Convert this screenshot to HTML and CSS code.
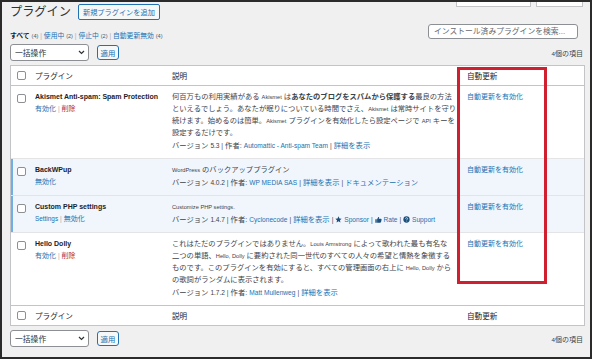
FILE: index.html
```html
<!DOCTYPE html>
<html lang="ja">
<head>
<meta charset="utf-8">
<title>プラグイン</title>
<link rel="stylesheet" href="styles.css">
</head>
<body>
<div class="frame">
    <div class="top">
        <div class="title-wrap">
            <h1 class="title">プラグイン</h1>
            <a class="add-new">新規プラグインを追加</a>
        </div>
        <div class="tabs"><span class="tab t1"></span><span class="tab t2"></span></div>
    </div>

    <div class="filters">
        <div class="subsubsub">
            <b>すべて</b> <span class="num">(4)</span> <span class="sep">|</span>
            <a>使用中</a> <span class="num">(2)</span> <span class="sep">|</span>
            <a>停止中</a> <span class="num">(2)</span> <span class="sep">|</span>
            <a>自動更新無効</a> <span class="num">(4)</span>
        </div>
        <input class="search" type="text" placeholder="インストール済みプラグインを検索...">
    </div>

    <div class="tablenav">
        <div class="bulk">
            <div class="select">一括操作
                <svg width="7" height="5" viewBox="0 0 7 5"><path d="M1 1l2.5 2.5L6 1" fill="none" stroke="#2c3338" stroke-width="1.2"/></svg>
            </div>
            <button class="apply">適用</button>
        </div>
        <span class="count"><span class="en">4</span>個の項目</span>
    </div>

    <div class="table-wrap">
        <table class="plugins">
            <colgroup>
                <col class="c-cb"><col class="c-name"><col class="c-desc"><col class="c-auto">
            </colgroup>
            <thead>
                <tr>
                    <th class="cb"><input class="check" type="checkbox"></th>
                    <th>プラグイン</th>
                    <th>説明</th>
                    <th>自動更新</th>
                </tr>
            </thead>
            <tbody>
                <tr>
                    <td class="cb"><input class="check" type="checkbox"></td>
                    <td class="name">
                        <strong>Akismet Anti-spam: Spam Protection</strong>
                        <div class="actions"><a>有効化</a> <span class="sep">|</span> <a class="del">削除</a></div>
                    </td>
                    <td class="desc">
                        <p>何百万もの利用実績がある <span class="en">Akismet</span> は<strong>あなたのブログをスパムから保護する</strong>最良の方法<br>といえるでしょう。あなたが眠りについている時間でさえ、<span class="en">Akismet</span> は常時サイトを守り<br>続けます。始めるのは簡単。<span class="en">Akismet</span> プラグインを有効化したら設定ページで <span class="en">API</span> キーを<br>設定するだけです。</p>
                        <div class="version">バージョン <span class="en">5.3 |</span> 作者: <a class="en">Automattic - Anti-spam Team</a> <span class="en">|</span> <a>詳細を表示</a></div>
                    </td>
                    <td class="auto"><a>自動更新を有効化</a></td>
                </tr>
                <tr class="active">
                    <td class="cb"><input class="check" type="checkbox"></td>
                    <td class="name">
                        <strong>BackWPup</strong>
                        <div class="actions"><a>無効化</a></div>
                    </td>
                    <td class="desc">
                        <p><span class="en">WordPress</span> のバックアッププラグイン</p>
                        <div class="version">バージョン <span class="en">4.0.2 |</span> 作者: <a class="en">WP MEDIA SAS</a> <span class="en">|</span> <a>詳細を表示</a> <span class="en">|</span> <a>ドキュメンテーション</a></div>
                    </td>
                    <td class="auto"><a>自動更新を有効化</a></td>
                </tr>
                <tr class="active">
                    <td class="cb"><input class="check" type="checkbox"></td>
                    <td class="name">
                        <strong>Custom PHP settings</strong>
                        <div class="actions"><a class="en">Settings</a> <span class="sep">|</span> <a>無効化</a></div>
                    </td>
                    <td class="desc">
                        <p><span class="en">Customize PHP settings.</span></p>
                        <div class="version">バージョン <span class="en">1.4.7 |</span> 作者: <a class="en">Cyclonecode</a> <span class="en">|</span> <a>詳細を表示</a> <span class="en">|</span>
                            <a class="en"><svg class="ico" viewBox="0 0 20 20"><path d="M10 1l2.7 6 6.3.6-4.8 4.3 1.4 6.4L10 15l-5.6 3.3 1.4-6.4L1 7.6 7.3 7z" fill="#1d4f7c"/></svg> Sponsor</a> <span class="en">|</span>
                            <a class="en"><svg class="ico" viewBox="0 0 20 20"><path d="M1 9h4v10H1z M6 9.5l3.5-7c1.6 0 2.5 1 2.2 2.6L11 8h6c1.2 0 2 1 1.8 2.2l-1.3 6.5c-.3 1.3-1.2 2.3-2.5 2.3H6z" fill="#1d4f7c"/></svg> Rate</a> <span class="en">|</span>
                            <a class="en"><svg class="ico" viewBox="0 0 20 20"><circle cx="10" cy="10" r="9" fill="#1d4f7c"/><path d="M7.2 7.6c0-1.8 1.3-2.8 2.9-2.8 1.7 0 2.9 1 2.9 2.5 0 1.9-2.2 2.1-2.2 3.9" fill="none" stroke="#fff" stroke-width="2"/><circle cx="10.8" cy="14.4" r="1.3" fill="#fff"/></svg> Support</a>
                        </div>
                    </td>
                    <td class="auto"><a>自動更新を有効化</a></td>
                </tr>
                <tr>
                    <td class="cb"><input class="check" type="checkbox"></td>
                    <td class="name">
                        <strong>Hello Dolly</strong>
                        <div class="actions"><a>有効化</a> <span class="sep">|</span> <a class="del">削除</a></div>
                    </td>
                    <td class="desc">
                        <p>これはただのプラグインではありません。<span class="en">Louis Armstrong</span> によって歌われた最も有名な<br>二つの単語、<span class="en">Hello, Dolly</span> に要約された同一世代のすべての人々の希望と情熱を象徴する<br>ものです。このプラグインを有効にすると、すべての管理画面の右上に <span class="en">Hello, Dolly</span> から<br>の歌詞がランダムに表示されます。</p>
                        <div class="version">バージョン <span class="en">1.7.2 |</span> 作者: <a class="en">Matt Mullenweg</a> <span class="en">|</span> <a>詳細を表示</a></div>
                    </td>
                    <td class="auto"><a>自動更新を有効化</a></td>
                </tr>
            </tbody>
            <tfoot>
                <tr>
                    <th class="cb"><input class="check" type="checkbox"></th>
                    <th>プラグイン</th>
                    <th>説明</th>
                    <th>自動更新</th>
                </tr>
            </tfoot>
        </table>
        <div class="highlight"></div>
    </div>

    <div class="tablenav bottom">
        <div class="bulk">
            <div class="select">一括操作
                <svg width="7" height="5" viewBox="0 0 7 5"><path d="M1 1l2.5 2.5L6 1" fill="none" stroke="#2c3338" stroke-width="1.2"/></svg>
            </div>
            <button class="apply">適用</button>
        </div>
        <span class="count"><span class="en">4</span>個の項目</span>
    </div>
</div>
</body>
</html>
```

FILE: styles.css
```css
body {
    margin: 0;
    background: #fff;
    font-family: "Liberation Sans", "Noto Sans CJK JP", sans-serif;
    color: #3c434a;
}
a {
    color: #2271b1;
    text-decoration: none;
}
.en {
    font-size: 6.4px;
}
.frame {
    width: 592px;
    height: 359px;
    box-sizing: border-box;
    border: 2px solid #2b2b2b;
    background: #f0f0f1;
    padding: 0 7px 0 8px;
    overflow: hidden;
}

/* header */
.top {
    display: flex;
    justify-content: space-between;
    align-items: flex-start;
    height: 20px;
}
.title-wrap {
    display: flex;
    align-items: center;
    gap: 7px;
    margin-top: 2px;
}
.title {
    margin: 0;
    font-size: 12.2px;
    line-height: 16px;
    font-weight: 400;
    color: #2c3338;
}
.add-new {
    display: flex;
    align-items: center;
    height: 16px;
    box-sizing: border-box;
    padding: 0 4px;
    border: 1px solid #2271b1;
    border-radius: 2px;
    background: #f6f7f7;
    font-size: 7.2px;
}
.tabs {
    display: flex;
    gap: 5px;
}
.tab {
    height: 4px;
    background: #fff;
    border: 1px solid #c3c4c7;
    border-top: none;
}
.t1 { width: 73px; }
.t2 { width: 45px; }

.filters {
    display: flex;
    justify-content: space-between;
    align-items: flex-end;
    margin-top: 2px;
}
.subsubsub {
    font-size: 6.8px;
    line-height: 10px;
    margin-bottom: -2px;
    color: #646970;
}
.subsubsub b {
    color: #1d2327;
}
.subsubsub .num {
    font-size: 5.6px;
    color: #50575e;
}
.sep {
    color: #a7aaad;
    font-size: 6.4px;
}
.search {
    width: 150px;
    height: 15px;
    box-sizing: border-box;
    margin: 0 5px 0 0;
    padding: 0 5px;
    border: 1px solid #8c8f94;
    border-radius: 3px;
    background: #fff;
    font-family: inherit;
    font-size: 7.8px;
}
.search::placeholder {
    color: #646970;
}

.tablenav {
    display: flex;
    justify-content: space-between;
    align-items: center;
    margin-top: 5px;
    height: 17px;
}
.tablenav.bottom {
    margin-top: 4px;
}
.bulk {
    display: flex;
    align-items: center;
    gap: 8px;
}
.select {
    width: 79px;
    height: 17px;
    box-sizing: border-box;
    display: flex;
    align-items: center;
    justify-content: space-between;
    padding: 0 3px 0 4px;
    border: 1px solid #8c8f94;
    border-radius: 3px;
    background: #fff;
    font-size: 7.8px;
    color: #2c3338;
}
.apply {
    width: 22px;
    height: 15px;
    padding: 0;
    border: 1px solid #2271b1;
    border-radius: 3px;
    background: #f6f7f7;
    color: #2271b1;
    font-family: inherit;
    font-size: 7.4px;
}
.count {
    font-size: 7px;
    color: #3c434a;
}
.count .en {
    font-size: 6.2px;
}

/* table */
.table-wrap {
    position: relative;
    margin-top: 4px;
}
.plugins {
    width: 573px;
    table-layout: fixed;
    border-spacing: 0;
    border: 1px solid #c3c4c7;
    background: #fff;
}
.c-cb { width: 17px; }
.c-name { width: 137px; }
.c-desc { width: 295px; }
.c-auto { width: 124px; }

.plugins th {
    height: 19px;
    padding: 0 7px;
    text-align: left;
    font-weight: 400;
    font-size: 7.6px;
    color: #1d2327;
    vertical-align: middle;
}
.plugins thead th {
    border-bottom: 1px solid #c3c4c7;
}
.plugins tfoot th {
    border-top: 1px solid #c3c4c7;
}
.plugins .cb {
    padding: 0 0 0 6px;
}
.plugins td {
    padding: 5px 7px 6px;
    vertical-align: top;
    line-height: 12px;
    border-bottom: 1px solid #e4e4e6;
}
.plugins tbody tr:last-child td {
    border-bottom: none;
}
.plugins td.cb {
    padding: 8px 0 0 6px;
}
.check {
    appearance: none;
    display: block;
    width: 9px;
    height: 9px;
    margin: 0;
    border: 1px solid #8c8f94;
    border-radius: 2px;
    background: #fff;
}
.active td {
    background: #f0f6fc;
}
.active td.cb {
    box-shadow: inset 2px 0 0 #72aee6;
}

.name strong {
    display: block;
    white-space: nowrap;
    font-size: 7px;
    font-weight: 700;
    color: #1d2327;
}
.actions {
    font-size: 7px;
}
.del {
    color: #b32d2e;
}
.desc {
    font-size: 7.3px;
    white-space: nowrap;
}
.desc p {
    margin: 0 0 1px;
}
.desc p .en {
    font-size: 5.7px;
}
.desc strong {
    font-weight: 700;
}
.version .en {
    font-size: 6.6px;
}
.ico {
    width: 7px;
    height: 7px;
    vertical-align: -1px;
}
.auto {
    font-size: 7px;
}

.highlight {
    position: absolute;
    left: 447px;
    top: 2px;
    width: 90px;
    height: 217px;
    box-sizing: border-box;
    border: 3px solid #d0202f;
    pointer-events: none;
}
```
